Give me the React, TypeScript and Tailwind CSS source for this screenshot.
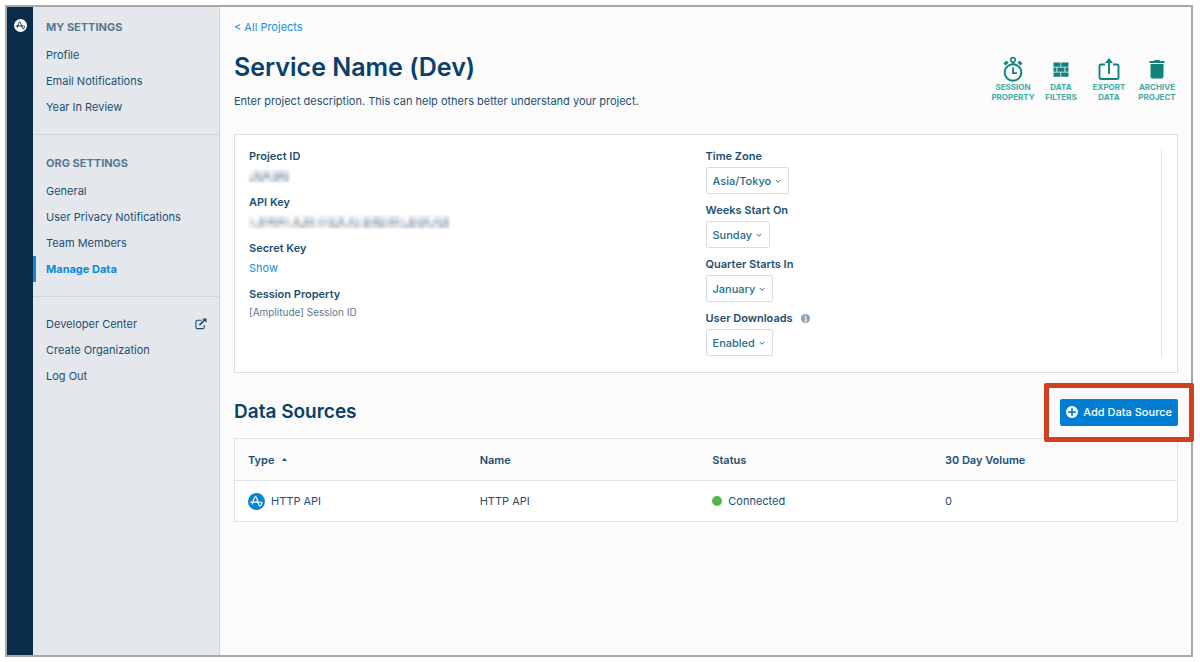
import { useState, type ReactNode } from 'react';

function AmplitudeMark({ className }: { className?: string }) {
  return (
    <svg viewBox="0 0 32 32" className={className} fill="none" strokeWidth="2.4" strokeLinecap="round" strokeLinejoin="round" aria-hidden="true">
      <circle cx="16" cy="16" r="16" fill="currentColor" stroke="none" />
      <g className="stroke-(--mark)">
        <path d="M5 17H19.500C23 17 26 17.300 26 18.500C26 20 24.700 24.500 22.500 24.500C20.300 24.500 19.500 20 18.200 15.500C16.800 10.500 15.800 7 14.200 7C12 7 10.300 13 8.300 20.500" />
      </g>
    </svg>
  );
}

function ExternalIcon() {
  return (
    <svg viewBox="0 0 26 26" className="size-3" fill="none" stroke="currentColor" strokeWidth="2.400" aria-hidden="true">
      <path d="M14 5H5Q2 5 2 8V20Q2 23 5 23H17Q20 23 20 20V15" />
      <path d="M9.500 15.500L21 4" strokeWidth="3.500" />
      <path d="M15.500 1H25V10.500Z" fill="currentColor" stroke="none" />
    </svg>
  );
}

function StopwatchIcon() {
  return (
    <svg viewBox="0 0 20 26" className="h-[26px] w-5" fill="none" stroke="currentColor" strokeWidth="2" aria-hidden="true">
      <circle cx="10" cy="16.500" r="8.300" />
      <circle cx="10" cy="3.800" r="2.300" strokeWidth="1.500" />
      <path d="M10 6V9" strokeWidth="2.200" />
      <path d="M10 11.500V17.200H14" strokeWidth="1.800" />
      <path d="M1.500 8.500L4.500 5.700M18.500 8.500L15.500 5.700" strokeWidth="3" />
    </svg>
  );
}

function BricksIcon() {
  return (
    <svg viewBox="0 0 16 26" className="h-[26px] w-4" fill="currentColor" aria-hidden="true">
      <path d="M0.500 6.500h7v4.300h-7zM8.200 6.500h7.300v4.300H8.200zM0.500 11.500h3v4.300h-3zM4.300 11.500h7.200v4.300H4.300zM12.300 11.500h3.200v4.300h-3.200zM0.500 16.500h7v4.300h-7zM8.200 16.500h7.300v4.300H8.200z" />
    </svg>
  );
}

function ExportIcon() {
  return (
    <svg viewBox="0 0 22 26" className="h-[26px] w-[22px]" fill="none" stroke="currentColor" strokeWidth="1.900" aria-hidden="true">
      <path d="M7 8.500H3Q1.500 8.500 1.500 10V21.500Q1.500 23 3 23H19Q20.500 23 20.500 21.500V10Q20.500 8.500 19 8.500H15" />
      <path d="M11 18V5" />
      <path d="M11 2L15 7H7Z" fill="currentColor" stroke="none" />
    </svg>
  );
}

function TrashIcon() {
  return (
    <svg viewBox="0 0 16 26" className="h-[26px] w-4" fill="currentColor" aria-hidden="true">
      <path d="M5.500 4H10.500L11 5H15.500V7H0.500V5H5Z" />
      <path d="M1.500 8H14.500V20.500Q14.500 22.500 12.500 22.500H3.500Q1.500 22.500 1.500 20.500Z" />
    </svg>
  );
}

function PlusCircle() {
  return (
    <svg viewBox="0 0 24 24" className="size-3" aria-hidden="true">
      <circle cx="12" cy="12" r="12" fill="#fff" />
      <path d="M12 4.500V19.500M4.500 12H19.500" stroke="#007fd2" strokeWidth="3.500" />
    </svg>
  );
}

function Masked({ columns, label }: { columns: number[]; label: string }) {
  return (
    <svg role="img" aria-label={label} width={columns.length * 5} height="12" className="block overflow-visible blur-[1px]">
      {columns.map((tone, i) => (
        <g key={i} fill="#5b7388">
          <rect x={i * 5} y="0" width="5" height="4" opacity={tone * 0.03} />
          <rect x={i * 5} y="4" width="5" height="4" opacity={tone * 0.05 + 0.06} />
          <rect x={i * 5} y="8" width="5" height="4" opacity={((tone * 3 + i) % 9) * 0.03 + 0.14} />
        </g>
      ))}
    </svg>
  );
}

const ID_TONES = [2, 7, 5, 8, 3, 7, 8, 6];
const KEY_TONES = [3, 1, 7, 5, 8, 6, 7, 4, 1, 7, 2, 7, 6, 2, 5, 4, 6, 3, 7, 1, 6, 4, 2, 7, 5, 8, 6, 4, 7, 6, 3, 1, 7, 5, 6, 7, 2, 6, 5, 7];

function NavGroup({ title, items, active }: { title?: string; items: string[]; active?: string }) {
  return (
    <section className="pt-3 pb-[14px]">
      {title && <h2 className="flex h-7 items-center pb-[2px] pl-[13px] font-bold text-[#5a788e]">{title}</h2>}
      <ul>
        {items.map((item) => (
          <li key={item}>
            <a
              href="#"
              className={
                item === active
                  ? 'flex h-[26px] items-center border-l-3 border-[#0a8ade] pl-[10px] font-bold text-[#0a8ade]'
                  : 'flex h-[26px] items-center justify-between pr-3 pl-[13px] text-[#1d4f70]'
              }
            >
              {item}
              {item === 'Developer Center' && <ExternalIcon />}
            </a>
          </li>
        ))}
      </ul>
    </section>
  );
}

function Action({ icon, top, bottom }: { icon: ReactNode; top: string; bottom: string }) {
  return (
    <button type="button" className="flex w-12 flex-col items-center text-[8px] leading-[10px] font-bold text-[#41aca5]">
      <span className="text-[#12827d]">{icon}</span>
      <span>{top}</span>
      <span>{bottom}</span>
    </button>
  );
}

function Field({ id, label, value, info }: { id: string; label: string; value: string; info?: boolean }) {
  const [selected, setSelected] = useState(value);
  return (
    <div className="flex flex-col items-start">
      <div className="flex h-5 items-center gap-2">
        <label htmlFor={id} className="font-semibold">{label}</label>
        {info && (
          <svg viewBox="0 0 18 18" className="size-[9px]" aria-hidden="true">
            <circle cx="9" cy="9" r="9" fill="#8fa3b1" />
            <path d="M7 7.500H10V13.500M6.500 14H12" stroke="#fff" strokeWidth="2" fill="none" />
            <circle cx="9.200" cy="4.500" r="1.500" fill="#fff" />
          </svg>
        )}
      </div>
      <div className="relative mt-px mb-[6px] flex items-center">
        <select
          id={id}
          value={selected}
          onChange={(e) => setSelected(e.target.value)}
          className="h-[27px] appearance-none rounded-[2px] border border-[#d5dee6] bg-white pr-4 pl-[6px] font-medium text-[#256c8c]"
        >
          <option>{value}</option>
        </select>
        <svg viewBox="0 0 12 12" className="pointer-events-none absolute right-2 size-[6px]" fill="none" stroke="#256c8c" strokeWidth="2" aria-hidden="true">
          <path d="M1.500 4L6 8.500L10.500 4" />
        </svg>
      </div>
    </div>
  );
}

export default function App() {
  return (
    <div className="flex min-h-screen bg-white pt-[5px] pr-[7px] pb-[5px] pl-[5px] font-[Inter,sans-serif] text-[11px] leading-4 text-[#1d4f70]">
      <div className="flex grow border-2 border-[#a8a8a8] bg-[#fbfbfc]">
        <div className="flex w-[26px] shrink-0 flex-col items-center bg-[#0b2b4b] pt-3">
          <AmplitudeMark className="size-[13px] text-white [--mark:#0b2b4b]" />
        </div>
        <nav className="w-[187px] shrink-0 border-r border-[#cbd7e1] bg-[#e4e8ed]" aria-label="Settings">
          <div className="-mt-[5px]">
            <NavGroup title="MY SETTINGS" items={['Profile', 'Email Notifications', 'Year In Review']} />
          </div>
          <div className="border-t border-[#cbd7e1] pt-[3px]">
            <NavGroup title="ORG SETTINGS" items={['General', 'User Privacy Notifications', 'Team Members', 'Manage Data']} active="Manage Data" />
          </div>
          <div className="border-t border-[#cbd7e1] pt-[2px]">
            <NavGroup items={['Developer Center', 'Create Organization', 'Log Out']} />
          </div>
        </nav>

        <main className="min-w-0 grow pt-3 pr-[13px] pl-[14px]">
          <a href="#" className="block text-[#1590dc]">&lt; All Projects</a>
          <header className="flex justify-between">
            <div>
              <h1 className="mt-4 text-[25px] leading-8 font-semibold text-[#0b4068]">Service Name (Dev)</h1>
              <p className="mt-[10px]">Enter project description. This can help others better understand your project.</p>
            </div>
            <div className="mt-[21px] -mr-[3px] flex">
              <Action icon={<StopwatchIcon />} top="SESSION" bottom="PROPERTY" />
              <Action icon={<BricksIcon />} top="DATA" bottom="FILTERS" />
              <Action icon={<ExportIcon />} top="EXPORT" bottom="DATA" />
              <Action icon={<TrashIcon />} top="ARCHIVE" bottom="PROJECT" />
            </div>
          </header>

          <section className="mt-[25px] grid grid-cols-2 border border-[#d8e0e7] bg-white pt-[15px] pr-[15px] pb-[14px] pl-[14px]">
            <dl className="-my-1 flex flex-col gap-[6px]">
              <div>
                <dt className="flex h-5 items-center font-semibold">Project ID</dt>
                <dd className="flex h-5 items-center"><Masked columns={ID_TONES} label="Hidden project ID" /></dd>
              </div>
              <div>
                <dt className="flex h-5 items-center font-semibold">API Key</dt>
                <dd className="flex h-5 items-center"><Masked columns={KEY_TONES} label="Hidden API key" /></dd>
              </div>
              <div>
                <dt className="flex h-5 items-center font-semibold">Secret Key</dt>
                <dd className="flex h-5 items-center"><button type="button" className="text-[#1590dc]">Show</button></dd>
              </div>
              <div>
                <dt className="flex h-5 items-center font-semibold">Session Property</dt>
                <dd className="text-[10px] text-[#5a788e]">[Amplitude] Session ID</dd>
              </div>
            </dl>
            <div className="border-r border-[#dfe5ea]">
              <div className="-my-1">
                <Field id="tz" label="Time Zone" value="Asia/Tokyo" />
                <Field id="week" label="Weeks Start On" value="Sunday" />
                <Field id="quarter" label="Quarter Starts In" value="January" />
                <Field id="downloads" label="User Downloads" value="Enabled" info />
              </div>
            </div>
          </section>

          <div className="mt-[25px] flex items-center justify-between">
            <h2 className="text-[19px] leading-7 font-semibold text-[#0b4068]">Data Sources</h2>
            <div className="relative">
              <button type="button" className="flex h-[27px] items-center gap-[5px] rounded-[2px] bg-[#007fd2] px-[6px] font-medium text-white">
                <PlusCircle />
                Add Data Source
              </button>
              <span className="pointer-events-none absolute -inset-4 z-10 rounded-[2px] border-5 border-[#cf3f20]" />
            </div>
          </div>

          <table className="mt-3 w-full table-fixed border-collapse border border-[#dbe2e8] text-left">
            <colgroup>
              <col className="w-[26%]" />
              <col />
              <col />
              <col />
            </colgroup>
            <thead>
              <tr className="h-[42px] border-b border-[#dbe2e8]">
                <th className="pl-[13px] font-semibold">
                  <span className="flex items-center gap-2">
                    Type
                    <svg viewBox="0 0 10 6" className="h-[3px] w-[5px]" fill="currentColor" aria-hidden="true"><path d="M0 6L5 0L10 6Z" /></svg>
                  </span>
                </th>
                <th className="font-semibold">Name</th>
                <th className="font-semibold">Status</th>
                <th className="font-semibold">30 Day Volume</th>
              </tr>
            </thead>
            <tbody>
              <tr className="h-[41px] bg-white">
                <td className="pl-[13px]">
                  <span className="flex items-center gap-[6px]">
                    <AmplitudeMark className="size-[17px] text-[#0a82d6] [--mark:#fff]" />
                    HTTP API
                  </span>
                </td>
                <td>HTTP API</td>
                <td>
                  <span className="flex items-center gap-[6px]">
                    <span className="size-[10px] rounded-full bg-[#4fb848]" />
                    Connected
                  </span>
                </td>
                <td>0</td>
              </tr>
            </tbody>
          </table>
        </main>
      </div>
    </div>
  );
}
